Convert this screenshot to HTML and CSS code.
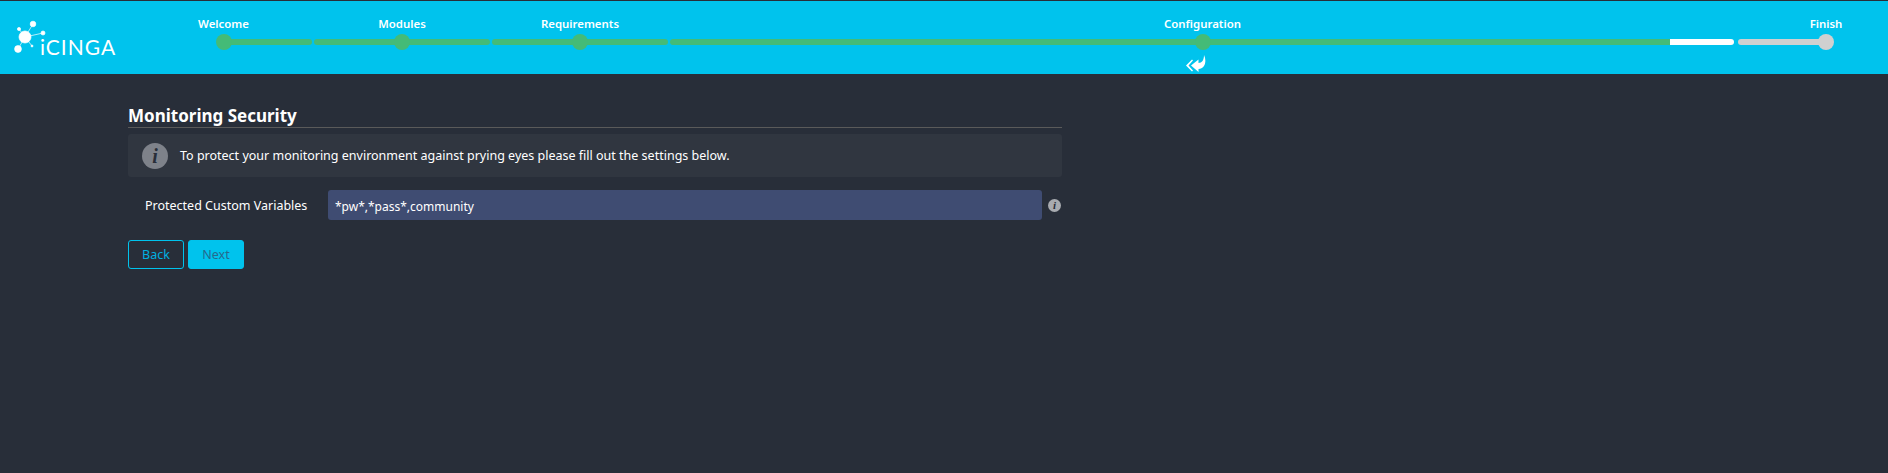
FILE: index.html
```html
<!DOCTYPE html>
<html lang="en">
<head>
    <meta charset="UTF-8">
    <title>Icinga Web 2 Setup</title>
    <link rel="stylesheet" href="styles.css">
</head>
<body>
    <header class="header">
        <div class="logo">
            <svg class="logo-mark" width="40" height="40" viewBox="0 0 40 40">
                <g stroke="#fff" stroke-width="0.7" fill="#fff">
                    <line x1="13" y1="20" x2="21" y2="7"/>
                    <line x1="13" y1="20" x2="6" y2="32"/>
                    <line x1="13" y1="20" x2="31" y2="16"/>
                    <line x1="13" y1="20" x2="7" y2="12"/>
                    <line x1="13" y1="20" x2="20" y2="29"/>
                    <circle cx="13" cy="20" r="6"/>
                    <circle cx="21" cy="7" r="2.8"/>
                    <circle cx="6" cy="32" r="3.4"/>
                    <circle cx="31" cy="16" r="2"/>
                    <circle cx="7" cy="12" r="1.6"/>
                    <circle cx="20" cy="29" r="1"/>
                </g>
            </svg>
            <span class="logo-text">iCINGA</span>
        </div>
        <ol class="steps">
            <li class="step first">
                <span class="step-label">Welcome</span>
                <div class="track"><span class="bar done half-right"></span><span class="dot done"></span></div>
            </li>
            <li class="step">
                <span class="step-label">Modules</span>
                <div class="track"><span class="bar done"></span><span class="dot done"></span></div>
            </li>
            <li class="step">
                <span class="step-label">Requirements</span>
                <div class="track"><span class="bar done"></span><span class="dot done"></span></div>
            </li>
            <li class="step current">
                <span class="step-label">Configuration</span>
                <div class="track"><span class="bar partial"></span><span class="dot done"></span></div>
                <svg class="step-arrow" width="20" height="18" viewBox="0 0 20 18">
                    <path fill="#fff" d="M18 0C21 6 19 14 12.500 14V17L5 10.500 12.500 4.500V8C16 8 18 5 18 0z"/>
                    <path fill="#fff" d="M6 4.500 0 10.500 6 16.500 7 15.500 2.500 10.500 7 5.500z"/>
                </svg>
            </li>
            <li class="step last">
                <span class="step-label">Finish</span>
                <div class="track"><span class="bar todo half-left"></span><span class="dot todo"></span></div>
            </li>
        </ol>
    </header>

    <main class="content">
        <h2 class="title">Monitoring Security</h2>
        <div class="notice">
            <span class="notice-icon">i</span>
            <span>To protect your monitoring environment against prying eyes please fill out the settings below.</span>
        </div>
        <div class="form-row">
            <label class="form-label" for="vars">Protected Custom Variables</label>
            <input class="form-input" id="vars" type="text" value="*pw*,*pass*,community">
            <span class="form-help">i</span>
        </div>
        <div class="buttons">
            <button class="btn btn-back">Back</button>
            <button class="btn btn-next">Next</button>
        </div>
    </main>
</body>
</html>
```

FILE: styles.css
```css
* { box-sizing: border-box; }
html, body { height: 100%; }
body { margin: 0; background: #282e39; color: #fff; font-family: "Noto Sans", "Open Sans", sans-serif; font-size: 12px; overflow: hidden; }

.header { display: flex; height: 73px; margin-top: 1px; background: #00c3ed; overflow: hidden; }
.logo { display: flex; flex: 0 0 134px; align-items: flex-start; padding: 16px 0 0 12px; }
.logo-mark { flex: none; }
.logo-text { margin: 17px 0 0 -12px; font-family: "Lato", sans-serif; font-size: 21px; font-weight: 400; letter-spacing: 1px; }

.steps { display: grid; grid-template-columns: 179px 178px 178px 1067px 180px; margin: 0; padding: 0; list-style: none; }
.step { display: flex; flex-direction: column; align-items: center; position: relative; padding-top: 14px; }
.step-label { font-size: 11.400px; font-weight: 600; line-height: 17px; white-space: nowrap; }
.track { position: relative; width: 100%; height: 16px; margin-top: 2px; }
.bar { position: absolute; top: 5px; left: 1px; right: 1px; height: 6px; border-radius: 3px; }
.bar.done { background: #44bb77; }
.bar.half-right { left: 50%; }
.bar.half-left { left: 2px; right: 50%; }
.bar.todo { background: #d0d0d0; }
.bar.partial { right: 2px; background: linear-gradient(to right, #44bb77 1000px, #fff 1000px); }
.dot { position: absolute; top: 0; left: 50%; width: 16px; height: 16px; margin-left: -8px; border-radius: 50%; }
.dot.done { background: #44bb77; }
.dot.todo { background: #d0d0d0; }
.step-arrow { margin: 5px 0 0 -14px; }

.content { width: 934px; margin-left: 128px; padding-top: 32px; }
.title { margin: 0; padding-bottom: 1px; border-bottom: 1px solid #5a5a5a; font-size: 17px; font-weight: 700; line-height: 20px; }
.notice { display: flex; align-items: center; height: 43px; margin-top: 6px; padding-left: 14px; background: #303640; border-radius: 3px; font-size: 12.500px; }
.notice-icon { width: 26px; height: 26px; margin-right: 12px; border-radius: 50%; background: #7e828a; color: #282e39; font: italic 700 20px/26px "Liberation Serif", serif; text-align: center; }
.form-row { display: flex; align-items: center; height: 30px; margin-top: 13px; }
.form-label { width: 200px; padding-left: 17px; font-size: 12.500px; }
.form-input { width: 714px; height: 30px; padding: 2px 7px 0; border: none; border-radius: 3px; background: #3f4c72; color: #fff; font: 12px "Noto Sans", sans-serif; }
.form-help { width: 13px; height: 13px; margin-left: 6px; border-radius: 50%; background: #a8abb0; color: #282e39; font: italic 700 11px/13px "Liberation Serif", serif; text-align: center; }
.buttons { display: flex; gap: 4px; margin-top: 20px; }
.btn { width: 56px; height: 29px; padding: 0; border: 1px solid #00c3ed; border-radius: 3px; font: 12.500px "Noto Sans", sans-serif; }
.btn-back { background: transparent; color: #00b0e0; }
.btn-next { background: #00c3ed; color: #256a8c; }
```
